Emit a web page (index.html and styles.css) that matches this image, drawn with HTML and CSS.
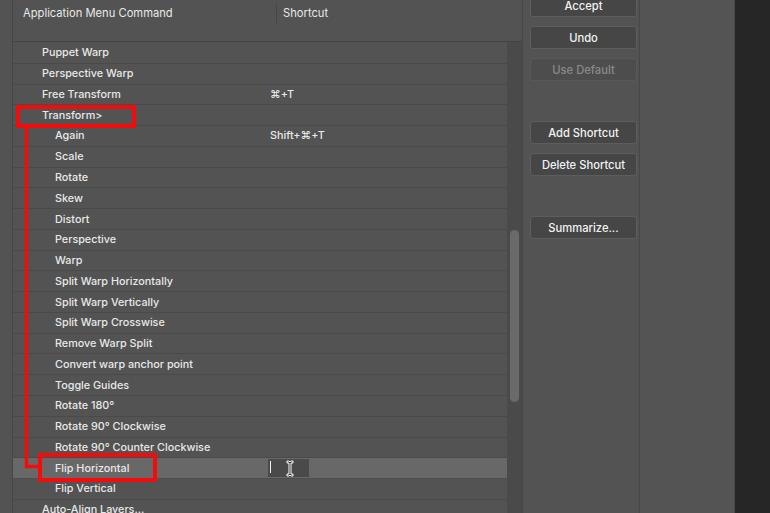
FILE: index.html
```html
<!DOCTYPE html>
<html lang="en">
<head>
  <meta charset="UTF-8" />
  <title>Keyboard Shortcuts</title>
  <link rel="stylesheet" href="styles.css">
</head>
<body>

<div class="table">
  <div class="table-head">
    <div class="head-cmd">Application Menu Command</div>
    <div class="head-key">Shortcut</div>
  </div>

  <div class="list">
    <div class="rows">
      <div class="row"><span class="cmd">Puppet Warp</span></div>
      <div class="row"><span class="cmd">Perspective Warp</span></div>
      <div class="row"><span class="cmd">Free Transform</span><span class="key">⌘+T</span></div>
      <div class="row"><span class="cmd">Transform&gt;</span></div>
      <div class="row sub"><span class="cmd">Again</span><span class="key">Shift+⌘+T</span></div>
      <div class="row sub"><span class="cmd">Scale</span></div>
      <div class="row sub"><span class="cmd">Rotate</span></div>
      <div class="row sub"><span class="cmd">Skew</span></div>
      <div class="row sub"><span class="cmd">Distort</span></div>
      <div class="row sub"><span class="cmd">Perspective</span></div>
      <div class="row sub"><span class="cmd">Warp</span></div>
      <div class="row sub"><span class="cmd">Split Warp Horizontally</span></div>
      <div class="row sub"><span class="cmd">Split Warp Vertically</span></div>
      <div class="row sub"><span class="cmd">Split Warp Crosswise</span></div>
      <div class="row sub"><span class="cmd">Remove Warp Split</span></div>
      <div class="row sub"><span class="cmd">Convert warp anchor point</span></div>
      <div class="row sub"><span class="cmd">Toggle Guides</span></div>
      <div class="row sub"><span class="cmd">Rotate 180°</span></div>
      <div class="row sub"><span class="cmd">Rotate 90° Clockwise</span></div>
      <div class="row sub"><span class="cmd">Rotate 90° Counter Clockwise</span></div>
      <div class="row sub selected">
        <span class="cmd">Flip Horizontal</span>
        <span class="key-input"><span class="caret"></span>
          <svg class="ibeam" viewBox="0 0 8 17" width="8" height="17">
            <path d="M1 1 H3 L4 2 L5 1 H7 V3 H5 V14 H7 V16 H5 L4 15 L3 16 H1 V14 H3 V3 H1 Z" fill="#333" stroke="#fff" stroke-width="1"/>
          </svg>
        </span>
      </div>
      <div class="row sub"><span class="cmd">Flip Vertical</span></div>
      <div class="row"><span class="cmd">Auto-Align Layers...</span></div>
    </div>
    <div class="track"><div class="thumb"></div></div>
  </div>
</div>

<div class="buttons">
  <div class="btn first">Accept</div>
  <div class="btn">Undo</div>
  <div class="btn disabled">Use Default</div>
  <div class="btn group">Add Shortcut</div>
  <div class="btn">Delete Shortcut</div>
  <div class="btn group">Summarize...</div>
</div>

<div class="side"></div>
<div class="dark"></div>

<!-- red markup drawn over the screenshot -->
<svg class="marks" width="770" height="513" viewBox="0 0 770 513">
  <rect x="18" y="107" width="116" height="19" fill="none" stroke="#f30c0c" stroke-width="4"/>
  <path d="M26.5 126 V466.5 H40" fill="none" stroke="#f30c0c" stroke-width="3.5"/>
  <rect x="40" y="455" width="115" height="25" fill="none" stroke="#f30c0c" stroke-width="4"/>
</svg>

</body>
</html>
```

FILE: styles.css
```css
body {
  margin: 0;
  width: 770px;
  height: 513px;
  overflow: hidden;
  position: relative;
  display: flex;
  background: #535353;
  font-family: "Inter", "Liberation Sans", sans-serif;
  font-size: 10.8px;
  font-weight: 500;
  color: #e8e8e8;
}

.table {
  margin-left: 12px;
  width: 509px;
  border-left: 1px solid #474747;
  border-right: 1px solid #464646;
  display: flex;
  flex-direction: column;
}

.table-head {
  flex-shrink: 0;
  height: 42px;
  border-bottom: 1px solid #444;
  display: flex;
  align-items: flex-start;
  box-sizing: border-box;
}

.head-cmd {
  width: 253px;
  padding-left: 10px;
  margin-top: 3px;
  line-height: 20px;
  font-weight: 400;
  font-size: 11.2px;
}

.head-key {
  margin-top: 3px;
  padding-left: 6px;
  border-left: 1px solid #464646;
  line-height: 20px;
  font-weight: 400;
  font-size: 11.2px;
}

.list {
  flex: 1;
  display: flex;
  overflow: hidden;
}

.rows {
  flex: 1;
  padding-top: 1px;
}

.row {
  height: 20.77px;
  box-sizing: border-box;
  border-bottom: 1px solid #4a4a4a;
  display: flex;
  align-items: center;
}

.cmd {
  width: 228px;
  padding-left: 29px;
  white-space: nowrap;
}

.row.sub .cmd {
  width: 215px;
  padding-left: 42px;
}

.row.selected {
  background: #686868;
  border-bottom-color: #4e4e4e;
}

.key-input {
  width: 41px;
  height: 18px;
  margin-left: -2px;
  background: #4a4a4a;
  position: relative;
}

.caret {
  position: absolute;
  left: 2px;
  top: 2px;
  width: 1px;
  height: 12px;
  background: #f0f0f0;
}

.ibeam {
  position: absolute;
  left: 18px;
  top: 1px;
}

.track {
  width: 15px;
  background: #4a4a4a;
}

.thumb {
  margin: 188px 0 0 3px;
  width: 9px;
  height: 172px;
  border-radius: 5px;
  background: #6a6a6a;
}

.buttons {
  width: 109px;
  padding-left: 7px;
  border-right: 1px solid #474747;
  display: flex;
  flex-direction: column;
  align-items: flex-start;
}

.btn {
  width: 107px;
  height: 23px;
  flex-shrink: 0;
  box-sizing: border-box;
  margin-top: 9px;
  border: 1px solid #5d5d5d;
  border-radius: 3px;
  background: #464646;
  color: #f2f2f2;
  font-size: 11.2px;
  display: flex;
  align-items: center;
  justify-content: center;
}

.btn.first {
  margin-top: -6px;
}

.btn.group {
  margin-top: 40px;
}

.btn.disabled {
  background: #4d4d4d;
  border-color: #595959;
  color: #8a8a8a;
}

.side {
  width: 94px;
  background: #545454;
  border-right: 1px solid #4a4a4a;
}

.dark {
  flex: 1;
  background: #262626;
}

.marks {
  position: absolute;
  left: 0;
  top: 0;
  pointer-events: none;
}
```
